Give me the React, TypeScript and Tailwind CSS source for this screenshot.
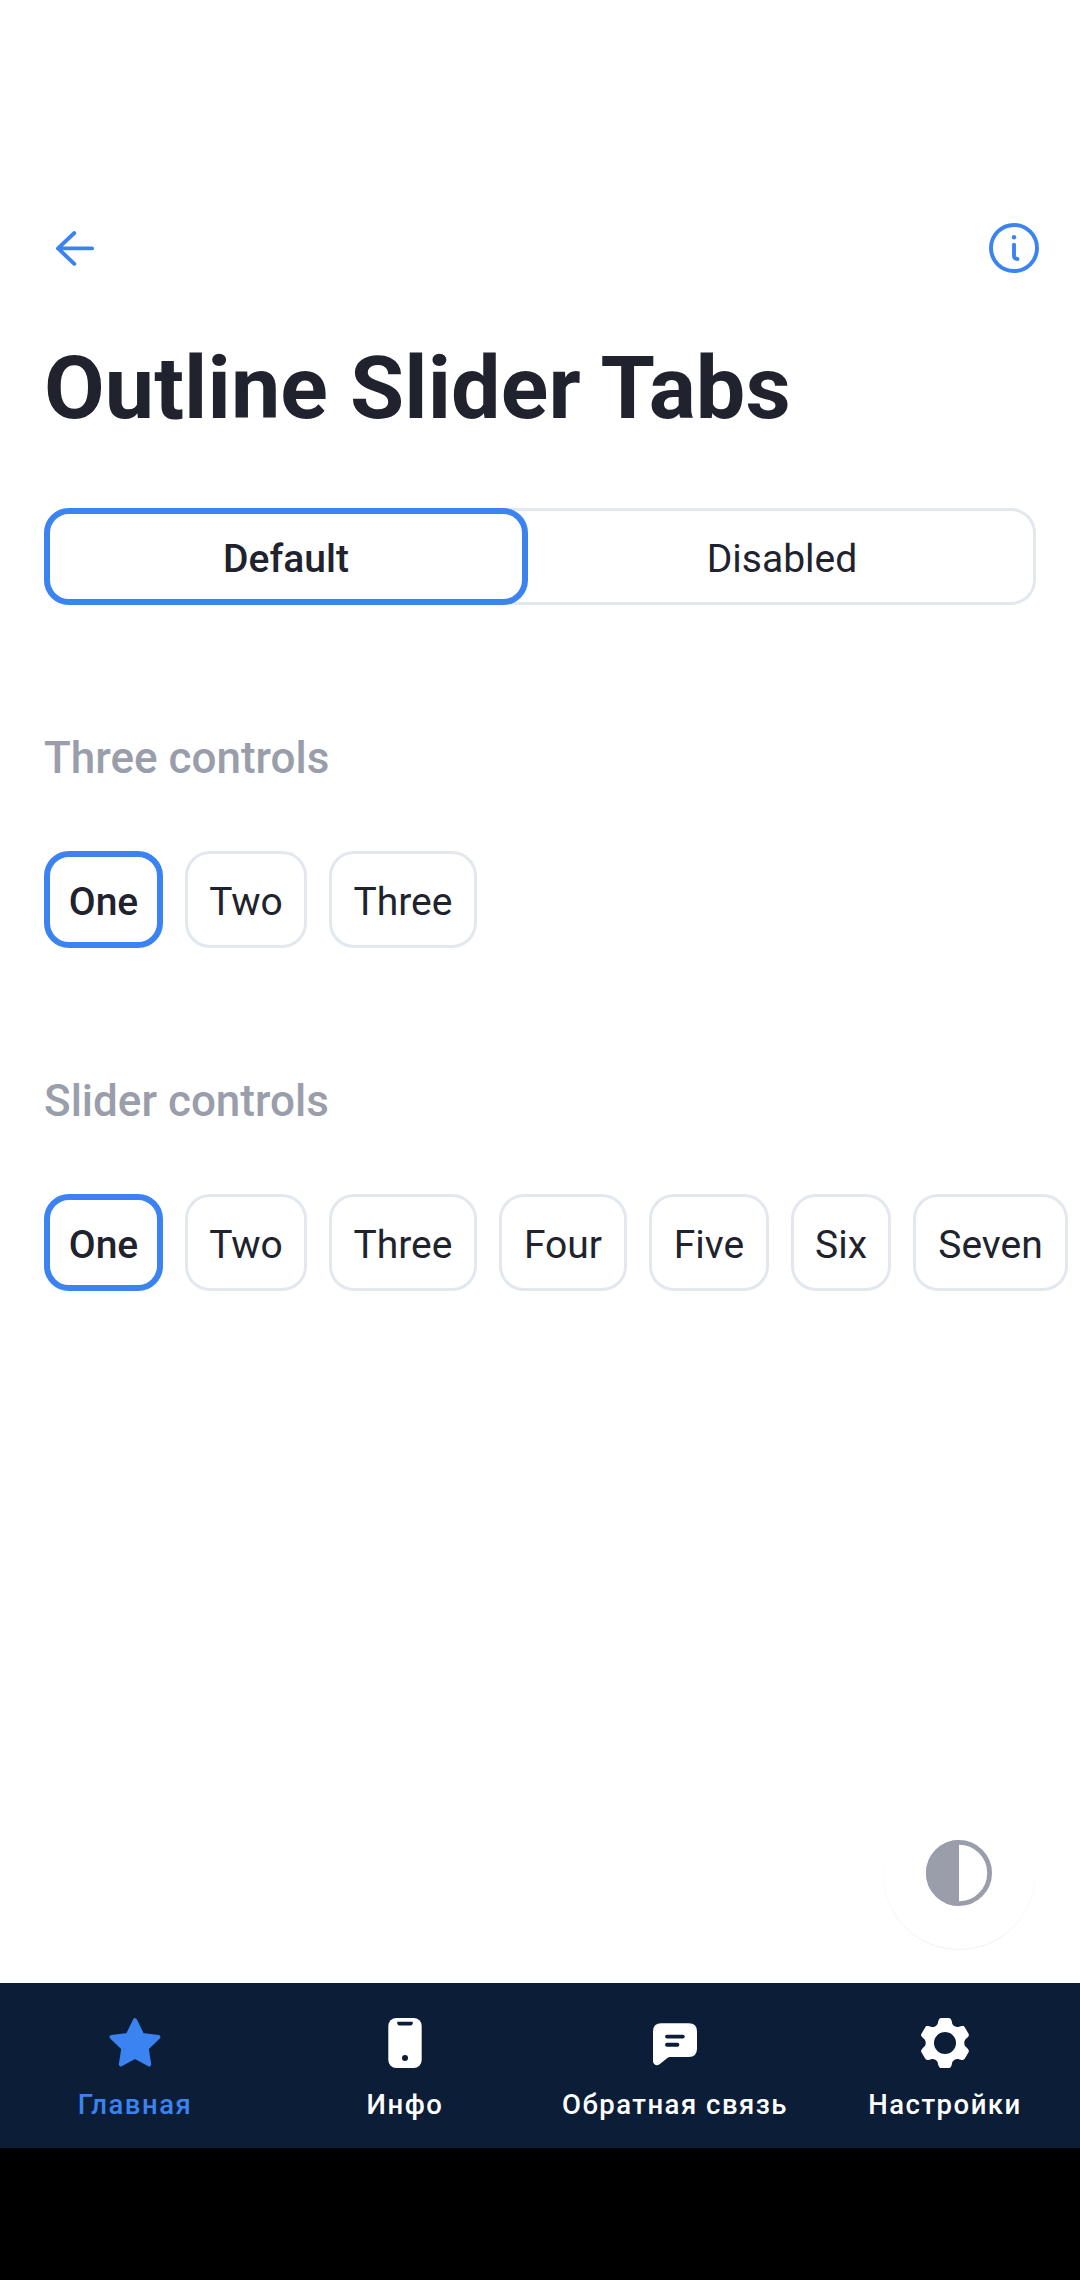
import type { ReactNode } from 'react';

type Chip = { label: string; width: string };

const threeChips: Chip[] = [
  { label: 'One', width: 'w-[119px]' },
  { label: 'Two', width: 'w-[122px]' },
  { label: 'Three', width: 'w-[148px]' },
];

const sliderChips: Chip[] = [
  ...threeChips,
  { label: 'Four', width: 'w-[128px]' },
  { label: 'Five', width: 'w-[120px]' },
  { label: 'Six', width: 'w-[100px]' },
  { label: 'Seven', width: 'w-[155px]' },
];

function Chips({ chips }: { chips: Chip[] }) {
  return (
    <div className="flex h-[97px] gap-[22px]">
      {chips.map((chip, i) => (
        <button
          key={chip.label}
          className={`flex shrink-0 items-center justify-center rounded-[25px] text-[39px] leading-[52px] ${chip.width} ${
            i === 0 ? 'border-[6px] border-[#3a83f1] font-medium' : 'border-[3px] border-[#e3e7ee]'
          }`}
        >
          <span className="pt-[4px]">{chip.label}</span>
        </button>
      ))}
    </div>
  );
}

function BackIcon() {
  return (
    <svg width="66" height="66" viewBox="0 0 66 66" fill="none" stroke="#3a83f1" strokeWidth="3.9" strokeLinecap="round" strokeLinejoin="round">
      <path d="M30.3 18 14 33.4 30.3 48.8M14 33.4H48.1" />
    </svg>
  );
}

function InfoIcon() {
  return (
    <svg width="66" height="66" viewBox="0 0 66 66" fill="none" stroke="#3a83f1" strokeWidth="3.9" strokeLinecap="round">
      <circle cx="33" cy="33" r="23" />
      <path d="M33 29.6V40.5Q33 44 36.5 44" />
      <circle cx="33" cy="22.3" r="2.2" fill="#3a83f1" stroke="none" />
    </svg>
  );
}

function StarIcon() {
  return (
    <svg width="66" height="66" viewBox="0 0 66 66" fill="#3a83f1" stroke="#3a83f1" strokeWidth="4" strokeLinejoin="round">
      <path d="M33 10.2 40.2 24.9 56.4 27 44.7 38.4 47.2 54.4 33 46.8 18.8 54.4 21.3 38.4 9.6 27 25.8 24.9Z" />
    </svg>
  );
}

function PhoneIcon() {
  return (
    <svg width="66" height="66" viewBox="0 0 66 66">
      <rect x="16.3" y="8" width="33.4" height="50" rx="8" fill="#fff" />
      <path d="M25.3 11.7H40.7V13.2Q40.7 15.6 38.3 15.6H27.7Q25.3 15.6 25.3 13.2Z" fill="#0b1d37" />
      <circle cx="33" cy="48" r="3" fill="#0b1d37" />
    </svg>
  );
}

function ChatIcon() {
  return (
    <svg width="66" height="66" viewBox="0 0 66 66">
      <path d="M19.3 13.3H46.7Q55 13.3 55 21.6V38.7Q55 47 46.7 47H28Q26.6 47 25.4 48L17.6 54.2Q15.2 56 13 54.8Q11 53.8 11 51.2V21.6Q11 13.3 19.3 13.3Z" fill="#fff" />
      <path d="M25 26.6H40.8M25 34.7H35.4" stroke="#0b1d37" strokeWidth="3.9" strokeLinecap="round" />
    </svg>
  );
}

const toothPoints: [number, number][] = [
  [-6.8, -18.4], [-7.3, -20], [-6.6, -22.2],
  [-5.9, -24.4], [-5, -25], [-3.6, -25],
  [-1, -25], [1, -25], [3.6, -25],
  [5, -25], [5.9, -24.4], [6.6, -22.2],
  [7.3, -20], [6.8, -18.4], [9.65, -16.7],
];

const gearPath =
  'M-9.65 -16.7' +
  [0, 1, 2, 3, 4, 5]
    .map((k) => {
      const a = (k * Math.PI) / 3;
      const coords = toothPoints.map(
        ([x, y]) =>
          `${(x * Math.cos(a) - y * Math.sin(a)).toFixed(2)} ${(x * Math.sin(a) + y * Math.cos(a)).toFixed(2)}`,
      );
      return 'C' + coords.join(' ');
    })
    .join('') +
  'ZM11 0A11 11 0 1 0 -11 0A11 11 0 1 0 11 0Z';

function GearIcon() {
  return (
    <svg width="66" height="66" viewBox="-33 -33 66 66">
      <path d={gearPath} fill="#fff" fillRule="evenodd" />
    </svg>
  );
}

function NavItem({ label, icon, active = false }: { label: string; icon: ReactNode; active?: boolean }) {
  return (
    <button
      className={`flex w-[270px] flex-col items-center pt-[27px] text-[27.5px] font-medium leading-[32px] tracking-[1.5px] whitespace-nowrap ${
        active ? 'text-[#3a83f1]' : 'text-white'
      }`}
    >
      {icon}
      <span className="mt-[13px]">{label}</span>
    </button>
  );
}

export default function App() {
  return (
    <div className="relative flex h-[2280px] w-[1080px] flex-col overflow-hidden bg-white font-['Roboto',sans-serif] text-[#20232d]">
      <header className="mt-[215px] flex h-[66px] items-center justify-between pr-[33px] pl-[44px]">
        <BackIcon />
        <InfoIcon />
      </header>
      <main className="flex flex-1 flex-col pl-[44px]">
        <h1 className="mt-[55px] text-[88px] font-bold leading-[104px] tracking-[0.12px]">Outline Slider Tabs</h1>
        <div className="mt-[68px] flex h-[97px] w-[992px] rounded-[25px] shadow-[inset_0_0_0_3px_#e3e7ee]">
          <button className="flex w-[484px] items-center justify-center rounded-[25px] border-[6px] border-[#3a83f1] bg-white text-[39px] font-medium leading-[52px]">
            <span className="pt-[4px]">Default</span>
          </button>
          <button className="flex flex-1 items-center justify-center text-[39px] leading-[52px]">
            <span className="pt-[4px]">Disabled</span>
          </button>
        </div>
        <h2 className="mt-[127px] text-[44px] font-medium leading-[52px] text-[#9a9eaa]">Three controls</h2>
        <div className="mt-[67px]">
          <Chips chips={threeChips} />
        </div>
        <h2 className="mt-[127px] text-[44px] font-medium leading-[52px] text-[#9a9eaa]">Slider controls</h2>
        <div className="mt-[67px]">
          <Chips chips={sliderChips} />
        </div>
      </main>
      <button className="absolute top-[1797px] left-[883px] flex size-[152px] items-center justify-center rounded-full bg-white shadow-[0_1px_1px_rgba(0,0,0,0.06)]">
        <svg width="66" height="66" viewBox="0 0 66 66">
          <circle cx="33" cy="33" r="30.6" fill="none" stroke="#9a9eaa" strokeWidth="4.8" />
          <path d="M33 0A33 33 0 0 0 33 66Z" fill="#9a9eaa" />
        </svg>
      </button>
      <nav className="flex h-[165px] bg-[#0b1d37]">
        <NavItem label="Главная" icon={<StarIcon />} active />
        <NavItem label="Инфо" icon={<PhoneIcon />} />
        <NavItem label="Обратная связь" icon={<ChatIcon />} />
        <NavItem label="Настройки" icon={<GearIcon />} />
      </nav>
      <div className="h-[132px] bg-black" />
    </div>
  );
}
